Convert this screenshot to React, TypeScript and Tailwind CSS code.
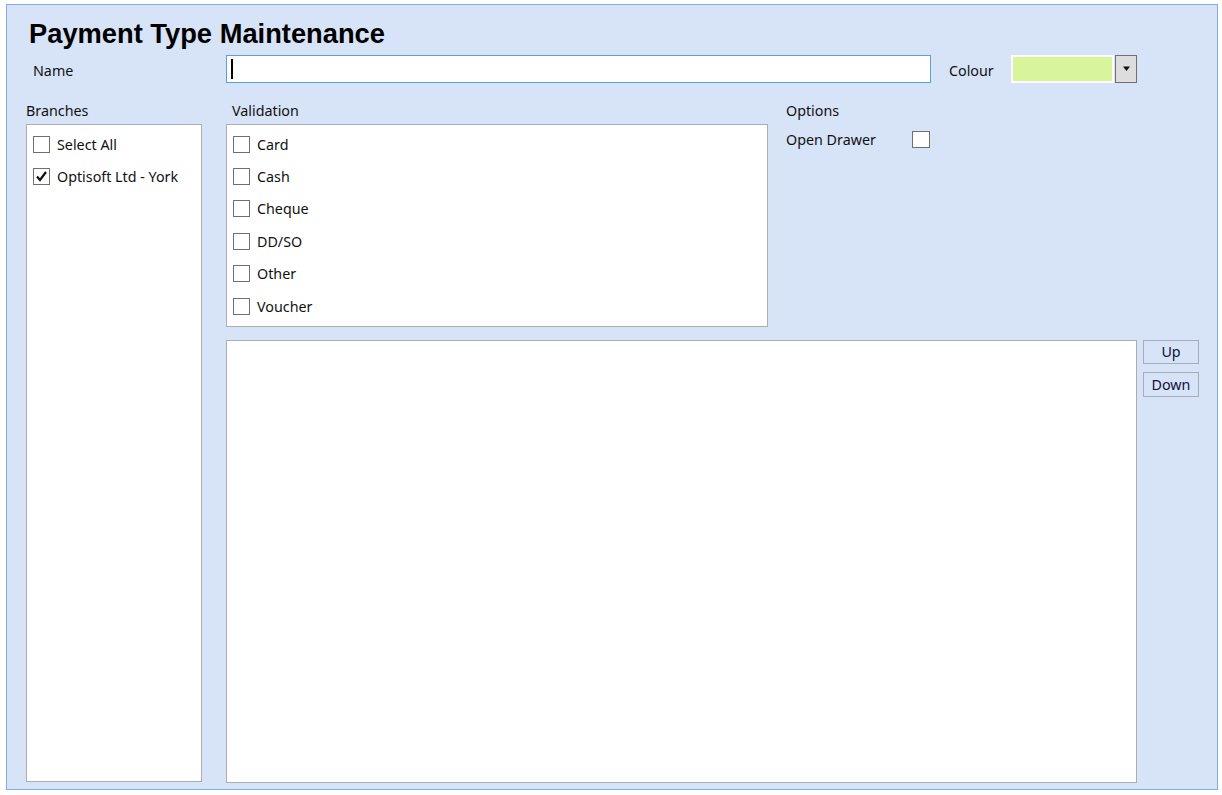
import React from "react";

const ui = { fontFamily: '"Noto Sans", "Open Sans", sans-serif' };

function Box({ checked = false }: { checked?: boolean }) {
  return (
    <div className="w-[17px] h-[17px] border border-[#707070] bg-white flex items-center justify-center shrink-0">
      {checked && (
        <svg width="13" height="13" viewBox="0 0 13 13">
          <path d="M2 6.5 L5 10 L11 2" fill="none" stroke="#111" strokeWidth="2.2" />
        </svg>
      )}
    </div>
  );
}

function Item({ label, checked = false }: { label: string; checked?: boolean }) {
  return (
    <div className="h-[32.4px] flex items-center">
      <Box checked={checked} />
      <span className="ml-[7px] text-[14.3px] text-[#111] leading-none pt-[1px]">{label}</span>
    </div>
  );
}

export default function App() {
  return (
    <div className="w-[1222px] h-[795px] bg-white pt-[4px] pl-[6px]" style={ui}>
      <div className="w-[1212px] h-[786px] border border-[#82acec] bg-[#d7e4f7] flex flex-col">
        <div
          className="mt-[13px] ml-[22px] h-[31px] leading-[31px] text-[27.3px] font-bold text-black"
          style={{ fontFamily: '"Liberation Sans", Arial, sans-serif' }}
        >
          Payment Type Maintenance
        </div>
        <div className="mt-[6px] flex items-center h-[28px]">
          <div className="w-[219px] pl-[26px] pt-[3px] text-[14.3px] text-[#111]">Name</div>
          <div className="w-[705px] h-[28px] border border-[#5b9de8] bg-white flex items-center pl-[4px]">
            <div className="w-[2px] h-[20px] bg-black" />
          </div>
          <div className="ml-[18px] w-[62px] pt-[3px] text-[14.3px] text-[#111]">Colour</div>
          <div className="w-[103px] h-[28px] border-2 border-white bg-[#d9f59c]" />
          <div className="ml-[1px] w-[22px] h-[28px] border border-[#707070] bg-[#dddddd] flex items-center justify-center">
            <svg width="9" height="6" viewBox="0 0 9 6">
              <path d="M1 0.5 H8 L4.5 5 Z" fill="#111" />
            </svg>
          </div>
        </div>
        <div className="mt-[17px] flex">
          <div className="ml-[19px] w-[176px] flex flex-col">
            <div className="h-[20px] pt-[2px] flex items-center text-[14.3px] text-[#111]">Branches</div>
            <div className="mt-[4px] h-[658px] border border-[#abadb3] bg-white pl-[6px] pt-[3px]">
              <Item label="Select All" />
              <Item label="Optisoft Ltd - York" checked />
            </div>
          </div>
          <div className="ml-[24px] flex flex-col">
            <div className="flex">
              <div className="w-[542px] flex flex-col">
                <div className="h-[20px] pt-[2px] flex items-center pl-[6px] text-[14.3px] text-[#111]">Validation</div>
                <div className="mt-[4px] h-[203px] border border-[#abadb3] bg-white pl-[6px] pt-[3px]">
                  <Item label="Card" />
                  <Item label="Cash" />
                  <Item label="Cheque" />
                  <Item label="DD/SO" />
                  <Item label="Other" />
                  <Item label="Voucher" />
                </div>
              </div>
              <div className="ml-[18px] flex flex-col">
                <div className="h-[20px] pt-[2px] flex items-center text-[14.3px] text-[#111]">Options</div>
                <div className="mt-[5px] flex items-center h-[29px]">
                  <span className="w-[126px] text-[14.3px] text-[#111]">Open Drawer</span>
                  <div className="w-[18px] h-[17px] border border-[#707070] bg-white" />
                </div>
              </div>
            </div>
            <div className="mt-[13px] flex">
              <div className="w-[911px] h-[443px] border border-[#abadb3] bg-white" />
              <div className="ml-[6px] flex flex-col gap-[8px]">
                <div className="w-[56px] h-[24px] border border-[#a5adba] flex items-center justify-center text-[14.3px] text-[#10103a]">Up</div>
                <div className="w-[56px] h-[25px] border border-[#a5adba] flex items-center justify-center text-[14.3px] text-[#10103a]">Down</div>
              </div>
            </div>
          </div>
        </div>
      </div>
    </div>
  );
}
